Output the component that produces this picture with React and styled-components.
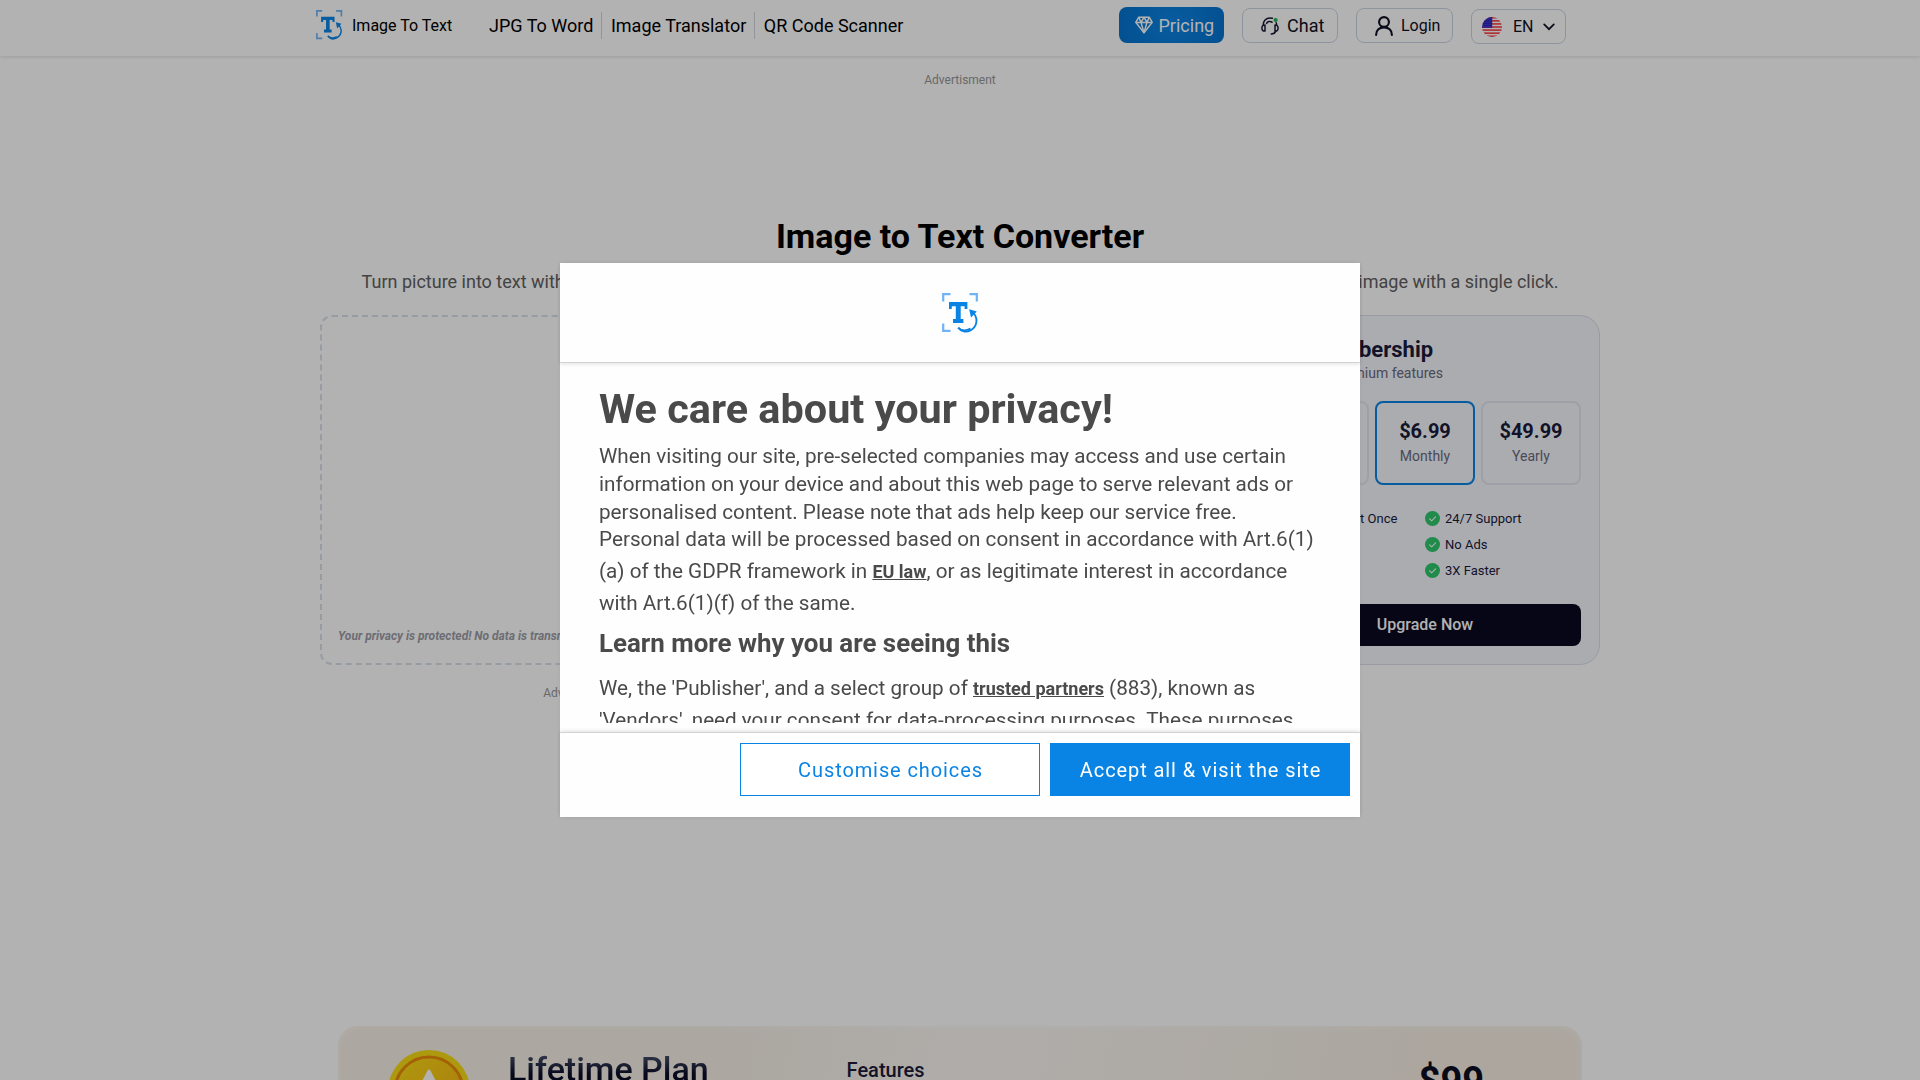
import React from "react";
import styled, { createGlobalStyle } from "styled-components";

const GlobalStyle = createGlobalStyle`
  *, *::before, *::after { box-sizing: border-box; }
  html, body { margin: 0; height: 100%; overflow: hidden; background: #fff; }
  body { font-family: Roboto, "Liberation Sans", sans-serif; color: #000; font-size: 16px; }
  h1, h2, h3, p, ul { margin: 0; padding: 0; }
  button { font-family: inherit; cursor: pointer; }
  svg { display: block; flex: none; }
`;

const Page = styled.div`
  height: 1080px;
  overflow: hidden;
`;

const Header = styled.header`
  height: 56px;
  background: #fff;
  box-shadow: 0 1px 3px rgba(0, 0, 0, 0.12);
`;

const HeaderInner = styled.div`
  width: 1280px;
  height: 50px;
  margin: 0 auto;
  display: flex;
  align-items: center;
`;

const Brand = styled.a`
  display: flex;
  align-items: center;
  gap: 9px;
  margin-left: -4px;
  width: 164px;
  font-size: 16px;
  white-space: nowrap;
`;

const Nav = styled.nav`
  display: flex;
  align-items: center;
`;

const NavLink = styled.a`
  font-size: 18px;
  line-height: 27px;
  padding: 0 7.6px 0 9px;
  white-space: nowrap;
  & + & { border-left: 1px solid #d1d5db; }
`;

const Actions = styled.div`
  display: flex;
  align-items: center;
  margin-left: auto;
  padding-right: 34px;
  gap: 18px;
`;

const ActionButton = styled.button`
  display: flex;
  align-items: center;
  height: ${(p) => (p.$primary ? 36 : 35)}px;
  width: ${(p) => p.$width}px;
  padding: 0 0 0 ${(p) => p.$pad}px;
  gap: ${(p) => p.$gap}px;
  margin-top: ${(p) => p.$drop || 0}px;
  border-radius: 8px;
  border: ${(p) => (p.$primary ? "0" : "1px solid #cbd5e1")};
  background: ${(p) => (p.$primary ? "radial-gradient(circle at 50% 40%, #0a84e4, #0573cf)" : "#fff")};
  color: ${(p) => (p.$primary ? "#fff" : "#0f0f23")};
  font-size: ${(p) => p.$size}px;
  white-space: nowrap;
`;

const AdLabel = styled.div`
  font-size: 12px;
  line-height: 18px;
  color: #969696;
  text-align: center;
  width: ${(p) => p.$width || "100%"};
  margin-top: ${(p) => p.$top}px;
`;

const Hero = styled.main`
  width: 1280px;
  margin: 0 auto;
`;

const HeroTitle = styled.h1`
  margin-top: 125px;
  font-size: 34px;
  line-height: 44px;
  font-weight: 700;
  text-align: center;
`;

const HeroText = styled.p`
  display: flex;
  justify-content: space-between;
  padding: 0 41.6px;
  margin-top: 12px;
  font-size: 18px;
  line-height: 24px;
  color: #606060;
`;

const Tools = styled.section`
  display: grid;
  grid-template-columns: 912px 350px;
  grid-template-rows: 350px;
  justify-content: space-between;
  margin-top: 21px;
`;

const DropZone = styled.div`
  display: flex;
  align-items: flex-end;
  border: 2px dashed #d9dee9;
  border-radius: 12px;
  padding: 0 16px 18px;
`;

const PrivacyNote = styled.span`
  font-size: 12px;
  line-height: 18px;
  font-weight: 700;
  font-style: italic;
  color: #9c9ca6;
  white-space: nowrap;
`;

const Membership = styled.aside`
  display: flex;
  flex-direction: column;
  border: 1px solid #dadeea;
  border-radius: 20px;
  background: #f5f6fc;
  padding: 20px 18px 18px;
  color: #1a1a3c;
`;

const MemberTitle = styled.h2`
  font-size: 22px;
  line-height: 28px;
  font-weight: 700;
  text-align: right;
  white-space: nowrap;
  padding-right: 148px;
`;

const MemberText = styled.p`
  font-size: 14px;
  line-height: 18px;
  color: #6a6a80;
  text-align: right;
  padding-right: 138px;
`;

const Plans = styled.div`
  display: grid;
  grid-template-columns: repeat(3, 100px);
  gap: 6px;
  margin-top: 19px;
`;

const Plan = styled.div`
  height: 84px;
  border: 2px solid ${(p) => (p.$active ? "#0a84e4" : "#e3e6ef")};
  border-radius: 8px;
  text-align: center;
  padding-top: 14px;
`;

const Price = styled.div`
  font-size: 20px;
  line-height: 28px;
  font-weight: 700;
`;

const Period = styled.div`
  font-size: 14px;
  line-height: 22px;
  color: #6a6a80;
`;

const Perks = styled.ul`
  display: grid;
  grid-template-columns: 156px 156px;
  grid-auto-rows: 26px;
  margin-top: 20px;
`;

const Perk = styled.li`
  display: flex;
  align-items: center;
  gap: 5px;
  font-size: 13px;
  white-space: nowrap;
`;

const UpgradeButton = styled.button`
  height: 42px;
  margin-top: auto;
  padding: 0 0 2px;
  border: 0;
  border-radius: 8px;
  background: #0a0920;
  color: #fff;
  font-size: 16px;
  font-weight: 500;
`;

const Lifetime = styled.section`
  display: flex;
  width: 1244px;
  height: 220px;
  margin: 324px auto 0;
  border-radius: 20px;
  background: linear-gradient(100deg, #f7efe5 0%, #f6efe6 30%, #fbf7f2 47%, #fbf7f2 55%, #f6eee4 85%, #f6eee4 100%);
  box-shadow: inset 0 0 10px rgba(255, 255, 255, 0.6);
`;

const Coin = styled.div`
  width: 170px;
  padding: 24px 0 0 50px;
`;

const LifetimeTitle = styled.h2`
  width: 338.6px;
  padding-top: 20px;
  font-size: 34px;
  line-height: 46px;
  font-weight: 500;
  span {
    background: linear-gradient(180deg, #5a6480 0%, #0b0d28 62%);
    background-clip: text;
    -webkit-background-clip: text;
    color: transparent;
  }
`;

const LifetimeFeatures = styled.h3`
  width: 572px;
  padding-top: 30px;
  font-size: 20px;
  line-height: 28px;
  font-weight: 500;
  color: #1a1a3c;
`;

const LifetimePrice = styled.div`
  padding-top: 33px;
  font-size: 38px;
  line-height: 44px;
  font-weight: 700;
  color: #0b0d20;
`;

const Backdrop = styled.div`
  position: fixed;
  inset: 0;
  display: flex;
  align-items: center;
  justify-content: center;
  background: rgba(0, 0, 0, 0.3);
`;

const Modal = styled.div`
  display: flex;
  flex-direction: column;
  width: 800px;
  height: 554px;
  background: #fefefe;
  box-shadow: 0 0 6px rgba(0, 0, 0, 0.06);
  color: #4a4a4a;
`;

const ModalHeader = styled.div`
  height: 100px;
  flex: none;
  display: flex;
  align-items: center;
  justify-content: center;
  border-bottom: 1px solid #d3d3d3;
  box-shadow: 0 1px 4px rgba(0, 0, 0, 0.12);
`;

const ModalBody = styled.div`
  height: 360px;
  flex: none;
  margin-bottom: 9px;
  padding: 21px 39px 0;
  overflow: hidden;
`;

const ModalTitle = styled.h2`
  font-size: 41.4px;
  line-height: 50px;
  font-weight: 700;
`;

const ModalText = styled.p`
  font-size: 20.7px;
  line-height: ${(p) => p.$line}px;
  margin-top: ${(p) => p.$top || 0}px;
  white-space: nowrap;
`;

const ModalSubtitle = styled.h3`
  font-size: 25.9px;
  line-height: 32px;
  font-weight: 700;
  margin-top: 8px;
`;

const TextLink = styled.a`
  font-size: 18px;
  font-weight: 700;
  text-decoration: underline;
`;

const ModalFooter = styled.div`
  flex: 1;
  display: flex;
  justify-content: flex-end;
  gap: 10px;
  padding: 10px 10px 0 0;
  border-top: 1px solid #d3d3d3;
  box-shadow: 0 -1px 4px rgba(0, 0, 0, 0.12);
`;

const ModalButton = styled.button`
  width: 300px;
  height: 53px;
  padding: 0 0 0 1px;
  border: 1px solid #0a84e4;
  background: ${(p) => (p.$filled ? "#0a84e4" : "#fff")};
  color: ${(p) => (p.$filled ? "#fff" : "#0a84e4")};
  font-size: 20px;
  letter-spacing: 0.9px;
`;

function Logo({ width, height }) {
  return (
    <svg width={width} height={height} viewBox="0 0 37 40" preserveAspectRatio="none" fill="none">
      <path d="M1.2 8.5V1.2H8.5M27.5 1.2H34.8V8.5M1.2 30.5V37.8H8.5" stroke="#6db3f5" strokeWidth="2.2" />
      <path
        d="M7 9H25.4V16H22.6V13.2H18.7V26H21.4V30H11V26H13.8V13.2H9.8V16H7Z"
        fill="#0a84e4"
      />
      <path d="M31.5 20C36.5 26 35 34 28.5 37.3C24 39.5 19 38.4 16.2 34.6" stroke="#0a84e4" strokeWidth="1.9" />
      <path d="M16.2 34.8C19 37.5 24 38 28.5 35.6" stroke="#0a84e4" strokeWidth="1.8" />
      <path d="M27.2 16.2L34.8 18.4L29 24.6Z" fill="#0a84e4" />
    </svg>
  );
}

function DiamondIcon() {
  return (
    <svg width="18" height="18" viewBox="0 0 18 18" fill="none" stroke="#fff" strokeWidth="1.5" strokeLinejoin="round">
      <path d="M3.8 1.2H14.2L17.2 6.4L9 16.8L0.8 6.4Z" />
      <path d="M0.8 6.4H17.2M3.8 1.2L6 6.4L9 1.4L12 6.4L14.2 1.2M6 6.4L9 16.6L12 6.4" />
    </svg>
  );
}

function HeadsetIcon() {
  return (
    <svg width="18" height="18" viewBox="0 0 18 18" fill="none" stroke="#1a1a35" strokeWidth="1.5" strokeLinecap="round">
      <path d="M2.4 8.2C2 3.8 5 0.9 9 0.9C9.9 0.9 10.7 1 11.4 1.3M15.6 8.2C15.6 7.4 15.5 6.6 15.2 5.8" />
      <path d="M5.6 6.4C6.4 4.4 9 3.8 11 5.2" />
      <path d="M4 8.2C2 7.8 0.9 9 0.9 11C0.9 13 2 14.4 4 14Z" />
      <path d="M14 8.2C16 7.8 17.1 9 17.1 11C17.1 13 16 14.4 14 14Z" />
      <path d="M14.8 14C14.2 16 12.6 17 10.2 17" />
      <circle cx="14.6" cy="3" r="2.1" fill="#22b45c" stroke="none" />
    </svg>
  );
}

function UserIcon() {
  return (
    <svg width="18" height="20" viewBox="0 0 18 20" fill="none" stroke="#0f0f23" strokeWidth="2.1" strokeLinecap="round">
      <circle cx="9" cy="6" r="4.9" />
      <path d="M1.1 18.9C1.1 14 4.4 11.4 9 11.4C13.6 11.4 16.9 14 16.9 18.9" />
    </svg>
  );
}

function FlagIcon() {
  const stripes = [0, 1, 2, 3, 4, 5, 6];
  return (
    <svg width="20" height="20" viewBox="0 0 20 20">
      <clipPath id="flag-round">
        <circle cx="10" cy="10" r="10" />
      </clipPath>
      <g clipPath="url(#flag-round)">
        <rect width="20" height="20" fill="#fff" />
        {stripes.map((i) => (
          <rect key={i} y={(i * 40) / 13} width="20" height={20 / 13} fill="#f8383f" />
        ))}
        <rect width="10.2" height="10.77" fill="#2a20c0" />
        {[1.5, 3.5, 5.5, 7.5, 9.3].map((y) =>
          [1, 3, 5, 7, 9].map((x) => <circle key={`${x}-${y}`} cx={x} cy={y} r="0.35" fill="#c9c9f2" />)
        )}
      </g>
    </svg>
  );
}

const Chevron = styled.svg`
  margin-left: -2px;
`;

function ChevronIcon() {
  return (
    <Chevron width="12" height="8" viewBox="0 0 12 8" fill="none" stroke="#0f0f23" strokeWidth="1.7" strokeLinecap="round">
      <path d="M1.2 1.4L6 6.2L10.8 1.4" />
    </Chevron>
  );
}

function CheckIcon() {
  return (
    <svg width="15" height="15" viewBox="0 0 15 15" fill="none">
      <circle cx="7.5" cy="7.5" r="7.5" fill="#2fc76c" />
      <path d="M4.6 7.8L6.7 9.8L10.6 5.8" stroke="#fff" strokeWidth="1.1" strokeLinecap="round" />
    </svg>
  );
}

function CoinIcon() {
  return (
    <svg width="82" height="82" viewBox="0 0 82 82">
      <defs>
        <linearGradient id="coin-face" x1="0" y1="0" x2="1" y2="1">
          <stop offset="0" stopColor="#fbdc18" />
          <stop offset="1" stopColor="#f5b010" />
        </linearGradient>
      </defs>
      <circle cx="41" cy="41" r="41" fill="#f6dc14" />
      <circle cx="41" cy="41" r="34" fill="url(#coin-face)" stroke="#ec8c0c" strokeWidth="3" />
      <path
        d="M41 21L47.5 33.5L61.5 36L51.8 46L53.8 60L41 53.8L28.2 60L30.2 46L20.5 36L34.5 33.5Z"
        fill="#fff"
        stroke="#fff"
        strokeWidth="3"
        strokeLinejoin="round"
      />
    </svg>
  );
}

const plans = [
  { price: "$2.99", period: "Weekly" },
  { price: "$6.99", period: "Monthly", active: true },
  { price: "$49.99", period: "Yearly" },
];

const perks = ["50 Images at Once", "24/7 Support", "Upto 30MB", "No Ads", "Unlimited", "3X Faster"];

export default function App() {
  return (
    <>
      <GlobalStyle />
      <Page>
        <Header>
          <HeaderInner>
            <Brand>
              <Logo width={27} height={30} />
              Image To Text
            </Brand>
            <Nav>
              <NavLink>JPG To Word</NavLink>
              <NavLink>Image Translator</NavLink>
              <NavLink>QR Code Scanner</NavLink>
            </Nav>
            <Actions>
              <ActionButton $primary $width={105} $pad={16} $gap={5.5} $size={18}>
                <DiamondIcon />
                Pricing
              </ActionButton>
              <ActionButton $width={96} $pad={18} $gap={8} $size={18} $drop={1}>
                <HeadsetIcon />
                Chat
              </ActionButton>
              <ActionButton $width={97} $pad={18} $gap={8} $size={16} $drop={1}>
                <UserIcon />
                Login
              </ActionButton>
              <ActionButton $width={95} $pad={10} $gap={11} $size={16} $drop={3}>
                <FlagIcon />
                EN
                <ChevronIcon />
              </ActionButton>
            </Actions>
          </HeaderInner>
        </Header>
        <AdLabel $top={15}>Advertisment</AdLabel>
        <Hero>
          <HeroTitle>Image to Text Converter</HeroTitle>
          <HeroText>
            <span>Turn picture into text with</span>
            <span>image with a single click.</span>
          </HeroText>
          <Tools>
            <DropZone>
              <PrivacyNote>Your privacy is protected! No data is transmitted or stored.</PrivacyNote>
            </DropZone>
            <Membership>
              <MemberTitle>Get Membership</MemberTitle>
              <MemberText>Unlock premium features</MemberText>
              <Plans>
                {plans.map((p) => (
                  <Plan key={p.period} $active={p.active}>
                    <Price>{p.price}</Price>
                    <Period>{p.period}</Period>
                  </Plan>
                ))}
              </Plans>
              <Perks>
                {perks.map((p) => (
                  <Perk key={p}>
                    <CheckIcon />
                    {p}
                  </Perk>
                ))}
              </Perks>
              <UpgradeButton>Upgrade Now</UpgradeButton>
            </Membership>
          </Tools>
          <AdLabel $top={19} $width="518px">Advertisment</AdLabel>
        </Hero>
        <Lifetime>
          <Coin>
            <CoinIcon />
          </Coin>
          <LifetimeTitle>
            <span>Lifetime Plan</span>
          </LifetimeTitle>
          <LifetimeFeatures>Features</LifetimeFeatures>
          <LifetimePrice>$99</LifetimePrice>
        </Lifetime>
      </Page>
      <Backdrop>
        <Modal>
          <ModalHeader>
            <Logo width={37} height={40} />
          </ModalHeader>
          <ModalBody>
            <ModalTitle>We care about your privacy!</ModalTitle>
            <ModalText $line={27.8} $top={9}>
              When visiting our site, pre-selected companies may access and use certain
              <br />
              information on your device and about this web page to serve relevant ads or
              <br />
              personalised content. Please note that ads help keep our service free.
              <br />
              Personal data will be processed based on consent in accordance with Art.6(1)
            </ModalText>
            <ModalText $line={31.6} $top={2}>
              (a) of the GDPR framework in <TextLink>EU law</TextLink>, or as legitimate interest in accordance
              <br />
              with Art.6(1)(f) of the same.
            </ModalText>
            <ModalSubtitle>Learn more why you are seeing this</ModalSubtitle>
            <ModalText $line={31.6} $top={14}>
              We, the 'Publisher', and a select group of <TextLink>trusted partners</TextLink> (883), known as
              <br />
              'Vendors', need your consent for data-processing purposes. These purposes
            </ModalText>
          </ModalBody>
          <ModalFooter>
            <ModalButton>Customise choices</ModalButton>
            <ModalButton $filled>Accept all &amp; visit the site</ModalButton>
          </ModalFooter>
        </Modal>
      </Backdrop>
    </>
  );
}
